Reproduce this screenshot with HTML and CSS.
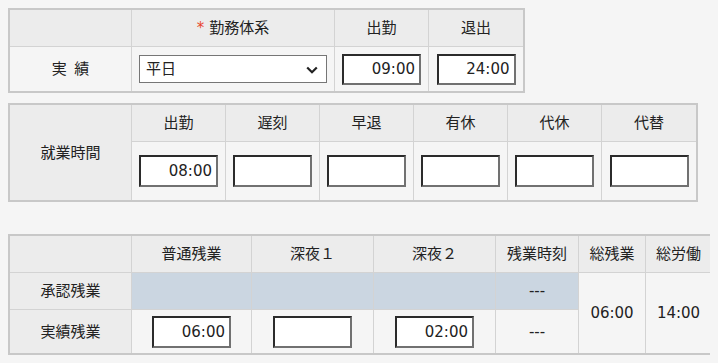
FILE: index.html
```html
<!DOCTYPE html>
<html lang="ja">
<head>
<meta charset="utf-8">
<title>勤務実績</title>
<link rel="stylesheet" href="styles.css">
</head>
<body>
<div class="grid grid-a">
  <div class="cell head"></div>
  <div class="cell head"><span class="req">*</span>勤務体系</div>
  <div class="cell head">出勤</div>
  <div class="cell head">退出</div>

  <div class="cell">実&ensp;績</div>
  <div class="cell">
    <span class="select-wrap">
      <select class="select"><option>平日</option></select>
      <svg class="chev" width="12" height="8" viewBox="0 0 12 8"><polyline points="1.2,1.5 6,6.2 10.8,1.5" fill="none" stroke="#222" stroke-width="2.2"/></svg>
    </span>
  </div>
  <div class="cell"><input class="time" value="09:00"></div>
  <div class="cell"><input class="time" value="24:00"></div>
</div>

<div class="grid grid-b">
  <div class="cell head span-rows">就業時間</div>
  <div class="cell head">出勤</div>
  <div class="cell head">遅刻</div>
  <div class="cell head">早退</div>
  <div class="cell head">有休</div>
  <div class="cell head">代休</div>
  <div class="cell head">代替</div>

  <div class="cell"><input class="time" value="08:00"></div>
  <div class="cell"><input class="time" value=""></div>
  <div class="cell"><input class="time" value=""></div>
  <div class="cell"><input class="time" value=""></div>
  <div class="cell"><input class="time" value=""></div>
  <div class="cell"><input class="time" value=""></div>
</div>

<div class="grid grid-c">
  <div class="cell head"></div>
  <div class="cell head">普通残業</div>
  <div class="cell head">深夜１</div>
  <div class="cell head">深夜２</div>
  <div class="cell head">残業時刻</div>
  <div class="cell head">総残業</div>
  <div class="cell head">総労働</div>

  <div class="cell head">承認残業</div>
  <div class="cell blue"></div>
  <div class="cell blue"></div>
  <div class="cell blue"></div>
  <div class="cell blue">---</div>
  <div class="cell span-rows">06:00</div>
  <div class="cell span-rows">14:00</div>

  <div class="cell head">実績残業</div>
  <div class="cell"><input class="time" value="06:00"></div>
  <div class="cell"><input class="time" value=""></div>
  <div class="cell"><input class="time" value="02:00"></div>
  <div class="cell">---</div>
</div>
</body>
</html>
```

FILE: styles.css
```css
html, body {
  background: #f5f5f5;
}
body {
  margin: 8px;
  font-family: "DejaVu Sans", "Noto Sans CJK JP", sans-serif;
  font-size: 15px;
  color: #222;
}
.grid {
  display: grid;
  width: max-content;
  gap: 1px;
  background: #d3d3d3;
  border: 2px solid #c8c8c8;
}
.grid-a {
  grid-template-columns: 121px 202px 93px 94px;
  grid-template-rows: 36px 44px;
}
.grid-b {
  margin-top: 10px;
  grid-template-columns: 121px 93px 93px 93px 93px 93px 94px;
  grid-template-rows: 36px 58px;
}
.grid-c {
  margin-top: 32px;
  grid-template-columns: 121px 119px 121px 121px 82px 66px 65px;
  grid-template-rows: 36px 36px 43px;
}
.cell {
  display: flex;
  align-items: center;
  justify-content: center;
  background: #f5f5f5;
  line-height: 20px;
  white-space: nowrap;
}
.head {
  background: #ececec;
}
.grid-c .head:nth-child(n+8) {
  background: #ececec;
}
.blue {
  background: #cbd6e1;
}
.span-rows {
  grid-row: span 2;
}
.req {
  color: #e8452c;
  margin-right: 5px;
}
.select-wrap {
  position: relative;
  display: inline-block;
  width: 188px;
  height: 28px;
}
.select {
  appearance: none;
  -webkit-appearance: none;
  box-sizing: border-box;
  width: 188px;
  height: 28px;
  margin: 0;
  padding: 0 0 0 6px;
  border: 1px solid #767676;
  border-radius: 0;
  background: #fff;
  font: inherit;
  color: #222;
}
.chev {
  position: absolute;
  right: 9px;
  top: 11px;
}
.time {
  box-sizing: border-box;
  width: 79px;
  height: 31px;
  margin: 0;
  padding: 0 4px 0 2px;
  border-style: solid;
  border-width: 2px;
  border-color: #2b2b2b #717171 #717171 #2b2b2b;
  background: #fff;
  font: inherit;
  color: #222;
  text-align: right;
}
.grid-b .time,
.grid-c .time {
  height: 32px;
}
```
